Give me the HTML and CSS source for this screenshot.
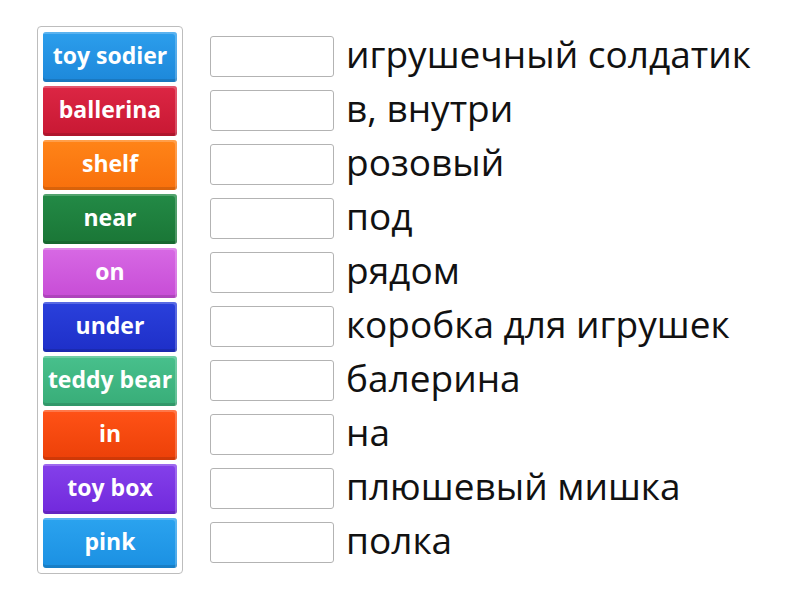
FILE: index.html
```html
<!DOCTYPE html>
<html>
<head>
    <meta charset="utf-8">
    <link rel="stylesheet" href="styles.css">
</head>
<body>
    <div class="board">
        <div class="tiles">
            <div class="tile blue">toy sodier</div>
            <div class="tile red">ballerina</div>
            <div class="tile orange">shelf</div>
            <div class="tile green">near</div>
            <div class="tile pink">on</div>
            <div class="tile navy">under</div>
            <div class="tile teal">teddy bear</div>
            <div class="tile fire">in</div>
            <div class="tile purple">toy box</div>
            <div class="tile sky">pink</div>
        </div>

        <div class="answers">
            <div class="row"><div class="slot"></div><span class="word">игрушечный солдатик</span></div>
            <div class="row"><div class="slot"></div><span class="word">в, внутри</span></div>
            <div class="row"><div class="slot"></div><span class="word">розовый</span></div>
            <div class="row"><div class="slot"></div><span class="word">под</span></div>
            <div class="row"><div class="slot"></div><span class="word">рядом</span></div>
            <div class="row"><div class="slot"></div><span class="word">коробка для игрушек</span></div>
            <div class="row"><div class="slot"></div><span class="word">балерина</span></div>
            <div class="row"><div class="slot"></div><span class="word">на</span></div>
            <div class="row"><div class="slot"></div><span class="word">плюшевый мишка</span></div>
            <div class="row"><div class="slot"></div><span class="word">полка</span></div>
        </div>
    </div>
</body>
</html>
```

FILE: styles.css
```css
body {
    margin: 0;
    background-color: white;
    color: #111;
    font-family: "Open Sans", "DejaVu Sans", sans-serif;
}

.board {
    display: flex;
    align-items: flex-start;
    padding: 26px 0 0 37px;
}

.tiles {
    display: flex;
    flex-direction: column;
    gap: 4px;
    padding: 5px;
    border: 1px solid #bdbdbd;
    border-radius: 4px;
}

.tile {
    width: 134px;
    height: 50px;
    box-sizing: border-box;
    display: flex;
    align-items: center;
    justify-content: center;
    color: white;
    font-size: 23px;
    font-weight: bold;
    white-space: nowrap;
    border-radius: 3px;
    box-shadow: inset -2px 2px 0 rgba(255, 255, 255, 0.22), inset 0 -3px 0 rgba(0, 0, 0, 0.12);
    padding-bottom: 5px;
}

.blue   { background: linear-gradient(#2c9eec, #1d88da); }
.red    { background: linear-gradient(#dc2644, #c81833); }
.orange { background: linear-gradient(#ff8418, #f8700c); }
.green  { background: linear-gradient(#238a46, #1a7636); }
.pink   { background: linear-gradient(#d769e4, #c74cd6); }
.navy   { background: linear-gradient(#2a40dc, #1e2fc8); }
.teal   { background: linear-gradient(#48c08c, #38ad78); }
.fire   { background: linear-gradient(#ff5216, #ec4008); }
.purple { background: linear-gradient(#8440ea, #7129dc); }
.sky    { background: linear-gradient(#2ba3ef, #1b90e2); }

.answers {
    display: flex;
    flex-direction: column;
    gap: 13px;
    margin-left: 27px;
    margin-top: 10px;
}

.row {
    display: flex;
    align-items: center;
    height: 41px;
}

.slot {
    width: 124px;
    height: 41px;
    box-sizing: border-box;
    border: 1px solid #b3b3b3;
    border-radius: 3px;
    background: white;
}

.word {
    margin-left: 12px;
    font-size: 37px;
    white-space: nowrap;
    padding-bottom: 7px;
}
```
